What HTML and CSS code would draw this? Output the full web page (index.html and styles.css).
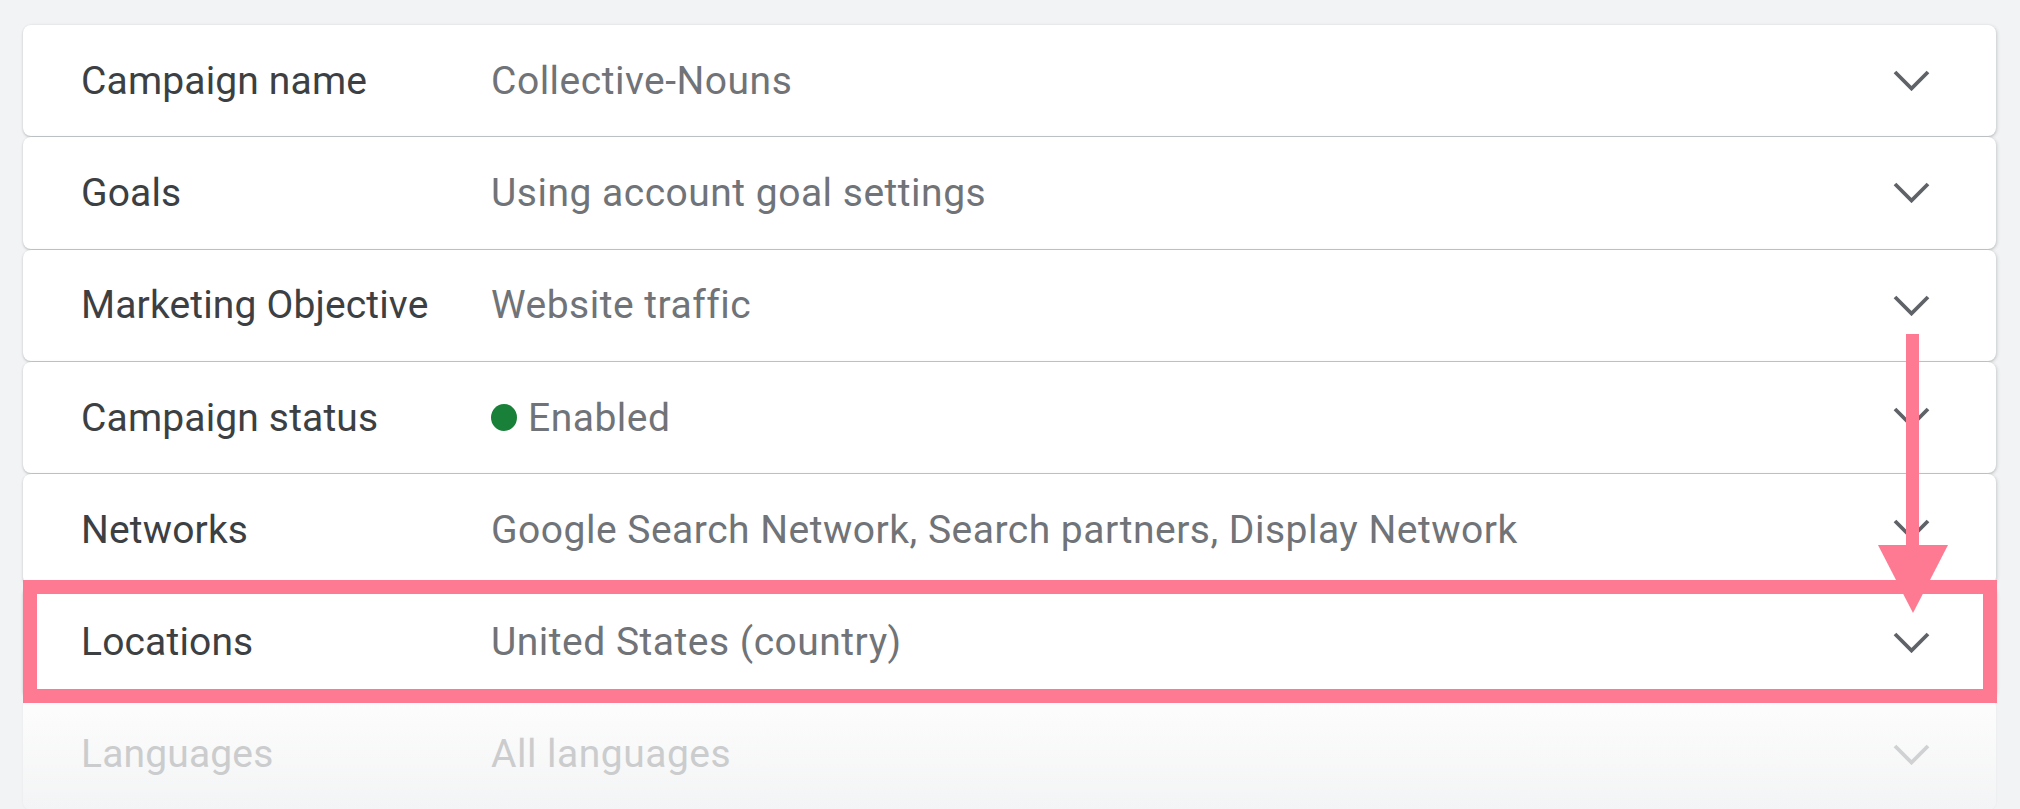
FILE: index.html
```html
<!DOCTYPE html>
<html>
<head>
<meta charset="utf-8">
<link rel="stylesheet" href="styles.css">
</head>
<body>
<div class="page">
  <div class="list">
    <div class="row">
      <div class="label">Campaign name</div>
      <div class="value">Collective-Nouns</div>
      <svg class="chev" viewBox="0 0 37 21"><polyline points="2,2 18.5,18.5 35,2"/></svg>
    </div>
    <div class="row">
      <div class="label">Goals</div>
      <div class="value">Using account goal settings</div>
      <svg class="chev" viewBox="0 0 37 21"><polyline points="2,2 18.5,18.5 35,2"/></svg>
    </div>
    <div class="row">
      <div class="label">Marketing Objective</div>
      <div class="value">Website traffic</div>
      <svg class="chev" viewBox="0 0 37 21"><polyline points="2,2 18.5,18.5 35,2"/></svg>
    </div>
    <div class="row">
      <div class="label">Campaign status</div>
      <div class="value"><span class="dot"></span>Enabled</div>
      <svg class="chev" viewBox="0 0 37 21"><polyline points="2,2 18.5,18.5 35,2"/></svg>
    </div>
    <div class="row">
      <div class="label">Networks</div>
      <div class="value">Google Search Network, Search partners, Display Network</div>
      <svg class="chev" viewBox="0 0 37 21"><polyline points="2,2 18.5,18.5 35,2"/></svg>
    </div>
    <div class="row">
      <div class="label">Locations</div>
      <div class="value">United States (country)</div>
      <svg class="chev" viewBox="0 0 37 21"><polyline points="2,2 18.5,18.5 35,2"/></svg>
    </div>
    <div class="row faded">
      <div class="label">Languages</div>
      <div class="value">All languages</div>
      <svg class="chev" viewBox="0 0 37 21"><polyline points="2,2 18.5,18.5 35,2"/></svg>
    </div>
  </div>
  <div class="highlight"></div>
  <svg class="arrow" viewBox="0 0 70 280">
    <rect x="28" y="0" width="13" height="230"/>
    <polygon points="0,211 70,211 35,279"/>
  </svg>
</div>
</body>
</html>
```

FILE: styles.css
```css
html, body {
  margin: 0;
  padding: 0;
  background: #f1f3f4;
  overflow: hidden;
}
.page {
  position: relative;
  width: 2020px;
  height: 809px;
  padding: 25px 24px 0 23px;
  box-sizing: border-box;
  font-family: Roboto, "Liberation Sans", sans-serif;
}
.list {
  display: grid;
  grid-auto-rows: 111.3px;
  row-gap: 1px;
}
.row {
  display: flex;
  align-items: center;
  background: #fff;
  border-radius: 8px;
  box-shadow: 0 1px 2px rgba(60, 64, 67, 0.22), 1px 1px 3px 1px rgba(60, 64, 67, 0.1);
  padding: 0 66px 0 58px;
}
.label {
  width: 410px;
  flex: none;
  font-size: 39px;
  color: #3c4043;
  letter-spacing: 0.15px;
}
.value {
  flex: 1;
  font-size: 39px;
  color: #707377;
  display: flex;
  align-items: center;
  letter-spacing: 0.5px;
}
.dot {
  width: 26px;
  height: 27px;
  border-radius: 50%;
  background: #188038;
  margin-right: 11px;
  flex: none;
}
.chev {
  width: 37px;
  height: 21px;
  flex: none;
}
.chev polyline {
  fill: none;
  stroke: #5f6368;
  stroke-width: 3.8;
}
.row.faded {
  background: linear-gradient(#fdfdfd, #f3f4f5);
  box-shadow: 0 0 2px rgba(60, 64, 67, 0.08);
}
.row.faded .label,
.row.faded .value {
  color: #cbcccd;
}
.row.faded .chev polyline {
  stroke: #d0d1d2;
}
.highlight {
  position: absolute;
  left: 23px;
  top: 580px;
  width: 1974px;
  height: 123px;
  box-sizing: border-box;
  border: 14px solid #fe7a92;
}
.arrow {
  position: absolute;
  left: 1878px;
  top: 334px;
  width: 70px;
  height: 280px;
}
.arrow rect,
.arrow polygon {
  fill: #fe7a92;
}
```
